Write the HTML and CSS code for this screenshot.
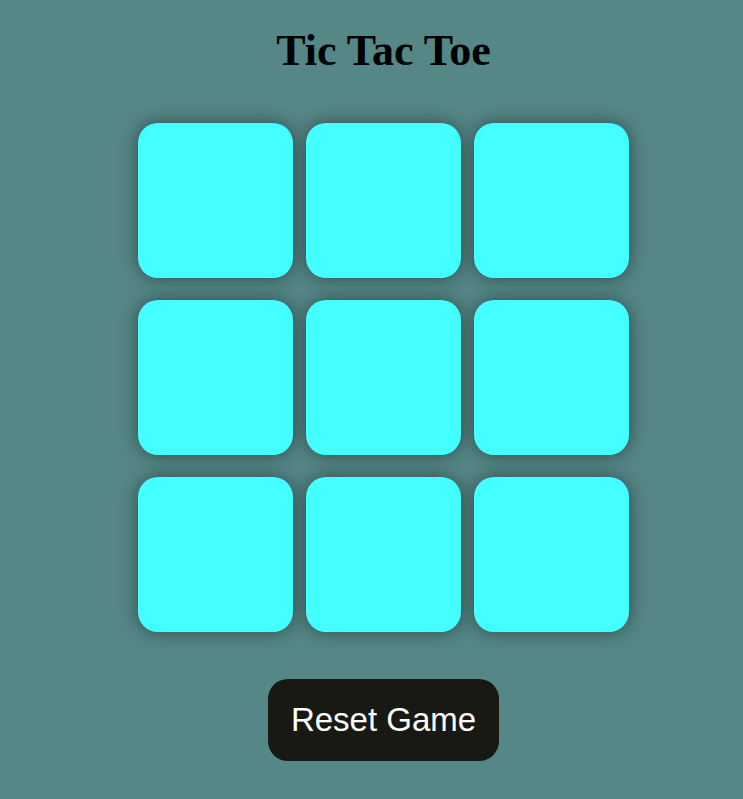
FILE: index.html
```html
<!DOCTYPE html>
<html>
<head>
<meta charset="utf-8">
<title>Tic Tac Toe</title>
<link rel="stylesheet" href="styles.css">
</head>
<body>
<main class="game">
  <h1 class="title">Tic Tac Toe</h1>
  <div class="board">
    <button class="cell"></button>
    <button class="cell"></button>
    <button class="cell"></button>
    <button class="cell"></button>
    <button class="cell"></button>
    <button class="cell"></button>
    <button class="cell"></button>
    <button class="cell"></button>
    <button class="cell"></button>
  </div>
  <button class="reset">Reset Game</button>
</main>
</body>
</html>
```
FILE: styles.css
```css
html, body {
  margin: 0;
  padding: 0;
  background: #548786;
  height: 100%;
}
.game {
  display: flex;
  flex-direction: column;
  align-items: center;
  padding-left: 24px;
  padding-top: 1px;
}
.title {
  font-family: "Liberation Serif", "Times New Roman", serif;
  font-weight: bold;
  font-size: 44px;
  line-height: 48px;
  margin: 26px 0 0 0;
  color: #000;
}
.board {
  margin-top: 48px;
  display: grid;
  grid-template-columns: repeat(3, 155px);
  grid-template-rows: repeat(3, 155.5px);
  column-gap: 13px;
  row-gap: 21.5px;
}
.cell {
  width: 155px;
  height: 155px;
  border: none;
  border-radius: 20px;
  background: #44ffff;
  box-shadow: 0 0 18px rgba(0, 0, 0, 0.45);
  padding: 0;
}
.reset {
  margin-top: 46px;
  width: 231px;
  height: 82px;
  border: none;
  border-radius: 20px;
  background: #191914;
  color: #fff;
  font-family: "Liberation Sans", Arial, sans-serif;
  font-size: 33px;
  padding: 0;
}
```
